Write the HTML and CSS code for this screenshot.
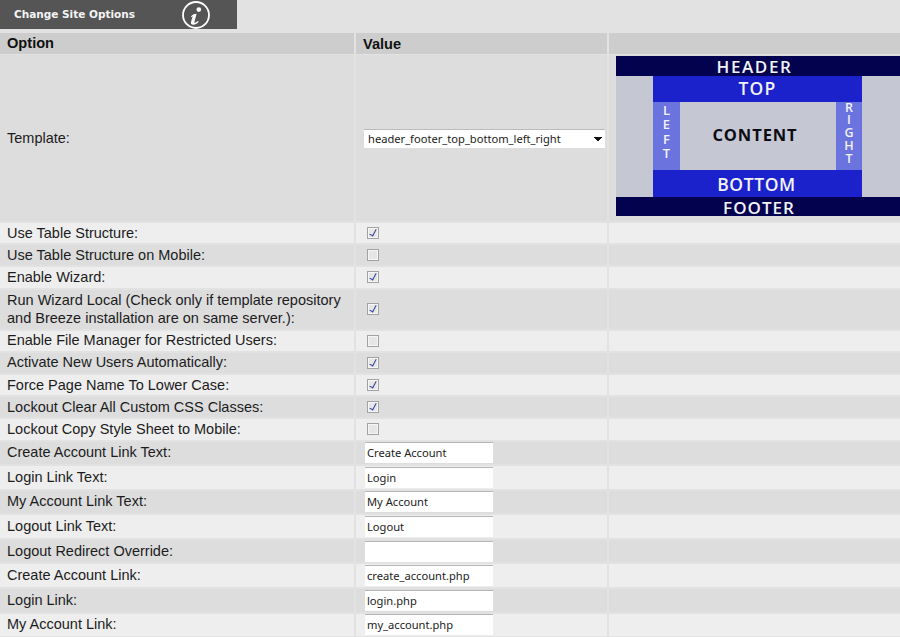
FILE: index.html
```html
<!DOCTYPE html>
<html lang="en">
<head>
<meta charset="utf-8">
<title>Change Site Options</title>
<link rel="stylesheet" href="styles.css">
</head>
<body>
<header class="titlebar">
  <h1 class="title">Change Site Options</h1>
  <svg class="info" viewBox="0 0 30 30" width="30" height="30" aria-hidden="true">
    <circle cx="15" cy="15" r="13" fill="none" stroke="#fff" stroke-width="1.8"/>
    <circle cx="17.8" cy="9.6" r="2.3" fill="#fff"/>
    <path d="M9.8 16.7c1.4-2 3.2-3 5.8-3l-2.2 8.2c-.3 1 .6 1.1 1.3.6l2.2-1.6.8.9c-1.7 2-3.4 3-5.4 3-2 0-2.8-1.1-2.3-2.7l1.7-6-1 1z" fill="#fff"/>
  </svg>
</header>
<div class="options">
  <div class="row head"><div class="cell">Option</div><div class="cell">Value</div><div class="cell"></div></div>
  <div class="row template">
    <div class="cell">Template:</div>
    <div class="cell sel-cell">
      <select class="select"><option>header_footer_top_bottom_left_right</option></select>
    </div>
    <div class="cell preview-cell">
      <div class="preview">
        <div class="pv-bar pv-header">HEADER</div>
        <div class="pv-middle">
          <div class="pv-inner">
            <div class="pv-band pv-top">TOP</div>
            <div class="pv-main">
              <div class="pv-side">L<br>E<br>F<br>T</div>
              <div class="pv-content">CONTENT</div>
              <div class="pv-side pv-right">R<br>I<br>G<br>H<br>T</div>
            </div>
            <div class="pv-band pv-bottom">BOTTOM</div>
          </div>
        </div>
        <div class="pv-bar pv-footer">FOOTER</div>
      </div>
    </div>
  </div>
  <div class="row odd"><div class="cell">Use Table Structure:</div><div class="cell chk"><input type="checkbox" class="check" checked></div><div class="cell"></div></div>
  <div class="row even"><div class="cell">Use Table Structure on Mobile:</div><div class="cell chk"><input type="checkbox" class="check"></div><div class="cell"></div></div>
  <div class="row odd"><div class="cell">Enable Wizard:</div><div class="cell chk"><input type="checkbox" class="check" checked></div><div class="cell"></div></div>
  <div class="row even tall"><div class="cell">Run Wizard Local (Check only if template repository and Breeze installation are on same server.):</div><div class="cell chk"><input type="checkbox" class="check" checked></div><div class="cell"></div></div>
  <div class="row odd"><div class="cell">Enable File Manager for Restricted Users:</div><div class="cell chk"><input type="checkbox" class="check"></div><div class="cell"></div></div>
  <div class="row even"><div class="cell">Activate New Users Automatically:</div><div class="cell chk"><input type="checkbox" class="check" checked></div><div class="cell"></div></div>
  <div class="row odd"><div class="cell">Force Page Name To Lower Case:</div><div class="cell chk"><input type="checkbox" class="check" checked></div><div class="cell"></div></div>
  <div class="row even"><div class="cell">Lockout Clear All Custom CSS Classes:</div><div class="cell chk"><input type="checkbox" class="check" checked></div><div class="cell"></div></div>
  <div class="row odd"><div class="cell">Lockout Copy Style Sheet to Mobile:</div><div class="cell chk"><input type="checkbox" class="check"></div><div class="cell"></div></div>
  <div class="row even inp"><div class="cell">Create Account Link Text:</div><div class="cell"><input class="text" type="text" value="Create Account"></div><div class="cell"></div></div>
  <div class="row odd inp"><div class="cell">Login Link Text:</div><div class="cell"><input class="text" type="text" value="Login"></div><div class="cell"></div></div>
  <div class="row even inp"><div class="cell">My Account Link Text:</div><div class="cell"><input class="text" type="text" value="My Account"></div><div class="cell"></div></div>
  <div class="row odd inp"><div class="cell">Logout Link Text:</div><div class="cell"><input class="text" type="text" value="Logout"></div><div class="cell"></div></div>
  <div class="row even inp"><div class="cell">Logout Redirect Override:</div><div class="cell"><input class="text" type="text" value=""></div><div class="cell"></div></div>
  <div class="row odd inp"><div class="cell">Create Account Link:</div><div class="cell"><input class="text" type="text" value="create_account.php"></div><div class="cell"></div></div>
  <div class="row even inp"><div class="cell">Login Link:</div><div class="cell"><input class="text" type="text" value="login.php"></div><div class="cell"></div></div>
  <div class="row odd inp"><div class="cell">My Account Link:</div><div class="cell"><input class="text" type="text" value="my_account.php"></div><div class="cell"></div></div>
</div>
</body>
</html>
```
FILE: styles.css
```css
html, body {
  margin: 0;
  height: 637px;
  overflow: hidden;
}
body {
  background: #e2e2e2;
  font-family: "Liberation Sans", Arial, sans-serif;
  font-size: 14.5px;
  color: #1c1c1c;
}
.titlebar {
  width: 237px;
  height: 29px;
  background: #555;
  display: flex;
  align-items: center;
  box-sizing: border-box;
  padding-left: 14px;
}
.title {
  margin: 0 0 2px;
  font-family: "DejaVu Sans", Verdana, sans-serif;
  font-size: 10.5px;
  font-weight: 700;
  color: #f4f4f4;
  width: 167px;
}
.info { display: block; }
.options {
  margin-top: 4px;
  display: flex;
  flex-direction: column;
  gap: 2px;
}
.row {
  display: grid;
  grid-template-columns: 354px 251px 1fr;
  column-gap: 2px;
  min-height: 20.2px;
  flex: none;
}
.cell {
  padding: 0 0 0 7px;
  display: flex;
  align-items: center;
  line-height: 18px;
  min-width: 0;
}
.cell:first-child { padding-bottom: 1px; }
.head { height: 21px; margin-bottom: -1px; }
.head .cell { background: #cdcdcd; font-weight: 700; font-size: 14.6px; color: #111; }
.template { height: 166px; }
.template .cell { background: #ddd; }
.odd .cell { background: #eee; }
.even .cell { background: #ddd; }
.tall { height: 39px; }
.inp { height: 22.6px; }
.inp .cell { padding-left: 9px; }
.inp .cell:first-child { padding-left: 7px; }
.chk { padding-left: 11px; }
.sel-cell { padding-left: 8px; }
.preview-cell { padding: 1px 0 5px 7px; align-items: flex-start; }
.select {
  appearance: none;
  width: 241px;
  height: 19px;
  border: 0;
  border-top: 1px solid #bbb;
  border-radius: 0;
  padding: 0 0 1px 4px;
  margin: 0;
  font-family: "Noto Sans", Tahoma, sans-serif;
  font-size: 11.15px;
  line-height: 17px;
  color: #222;
  background-color: #fff;
  background-image: linear-gradient(to top left, transparent 50%, #111 50%), linear-gradient(to top right, transparent 50%, #111 50%);
  background-size: 4px 4px;
  background-position: 234px 7px, 230px 7px;
  background-repeat: no-repeat;
}
.check {
  appearance: none;
  width: 12px;
  height: 12px;
  margin: 0;
  box-sizing: border-box;
  border: 1px solid #a2a2a2;
  background: #e6e6e6;
  box-shadow: inset 0 0 0 1px #f6f6f6;
  position: relative;
}
.check:checked::after {
  content: "";
  position: absolute;
  left: 3px;
  top: 0;
  width: 3px;
  height: 7px;
  border: solid #2f3f9e;
  border-width: 0 1.6px 1.6px 0;
  transform: rotate(28deg);
}
.text {
  width: 128px;
  height: 21px;
  box-sizing: border-box;
  border: 0;
  border-top: 1px solid #b5b5b5;
  margin: 0;
  padding: 0 0 1px 2px;
  font-family: "Noto Sans", Tahoma, sans-serif;
  font-size: 11.15px;
  line-height: 17px;
  color: #222;
  background: #fff;
  border-radius: 0;
}
.preview {
  width: 284px;
  height: 160px;
  display: flex;
  flex-direction: column;
  font-family: "Open Sans", "Noto Sans", sans-serif;
  font-weight: 600;
  color: #f2f2f8;
  text-align: center;
}
.pv-bar {
  background: #02024f;
  font-size: 17px;
  letter-spacing: 1.6px;
  box-sizing: border-box;
  padding-top: 2px;
  line-height: 17.5px;
  height: 19.5px;
  flex: none;
}
.pv-header { padding-right: 7px; }
.pv-footer { padding: 2px 0 0 2px; height: 19px; line-height: 17px; letter-spacing: 1px; }
.pv-middle {
  flex: 1;
  background: #c5c7d3;
  display: flex;
  justify-content: center;
  padding-right: 1px;
  min-height: 0;
}
.pv-inner {
  width: 209px;
  display: flex;
  flex-direction: column;
}
.pv-band {
  background: #1b22cb;
  font-size: 17.5px;
  letter-spacing: 1.2px;
  line-height: 24px;
  height: 26px;
  flex: none;
}
.pv-bottom { box-sizing: border-box; height: 27px; padding: 2px 2px 0 0; line-height: 24px; letter-spacing: .6px; }
.pv-main { flex: 1; display: flex; min-height: 0; }
.pv-side {
  width: 27px;
  background: #6b74de;
  font-size: 13px;
  line-height: 14.5px;
  padding-top: 1px;
  box-sizing: border-box;
}
.pv-right { font-size: 12.5px; line-height: 12.8px; padding-top: 0; width: 26px; }
.pv-content {
  flex: 1;
  color: #0c0c14;
  font-size: 16.5px;
  font-weight: 700;
  letter-spacing: .9px;
  display: flex;
  align-items: center;
  justify-content: center;
  padding: 0 6px 2px 0;
}
```
